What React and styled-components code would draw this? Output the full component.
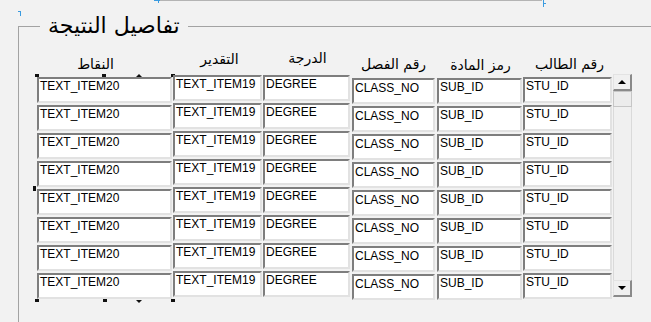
import styled, { createGlobalStyle } from 'styled-components'

const GlobalStyle = createGlobalStyle`
  html, body {
    margin: 0;
    padding: 0;
    background: #f2f2f2;
    overflow: hidden;
  }
`

const columns = [
  { name: 'TEXT_ITEM20', label: 'النقاط', width: 135, gap: 1, top: 3, lift: 1, shift: -9 },
  { name: 'TEXT_ITEM19', label: 'التقدير', width: 89, gap: 1, top: 1, lift: 6, shift: 2 },
  { name: 'DEGREE', label: 'الدرجة', width: 87, gap: 2, top: 1, lift: 7, shift: 1 },
  { name: 'CLASS_NO', label: 'رقم الفصل', width: 83, gap: 2, top: 4, lift: 1, shift: 0, textTop: 2 },
  { name: 'SUB_ID', label: 'رمز المادة', width: 85, gap: 1, top: 4, lift: 0, shift: 1 },
  { name: 'STU_ID', label: 'رقم الطالب', width: 89, gap: 1, top: 3, lift: 1, shift: 2 },
]

const ROWS = 8

const Page = styled.div`
  position: relative;
  width: 651px;
  height: 322px;
  overflow: hidden;
  font-family: "Liberation Sans", Arial, sans-serif;
`

const TopEdge = styled.div`
  height: 1px;
  width: 384px;
  margin-left: 158px;
  background: #b4b4b4;
`

const Mark = styled.div`
  position: absolute;
  left: ${p => p.x}px;
  top: ${p => p.y}px;
  width: ${p => p.w}px;
  height: ${p => p.h}px;
  background: #3a9be0;
`

const Frame = styled.fieldset`
  box-sizing: border-box;
  height: 310px;
  min-width: 0;
  margin: 11px 0 0 18px;
  padding: 0 0 0 18px;
  border: none;
  border-top: 1px solid #a3a3a3;
  border-left: 1px solid #a3a3a3;
`

const Legend = styled.legend`
  margin-left: 3px;
  padding: 0 8px;
  font-family: "DejaVu Sans", sans-serif;
  font-size: 22px;
  line-height: 28px;
  color: #000;
`

const HeaderRow = styled.div`
  display: flex;
  align-items: flex-end;
  height: 34px;
`

const Header = styled.div`
  box-sizing: border-box;
  display: flex;
  justify-content: center;
  width: ${p => p.width}px;
  margin-right: ${p => p.gap}px;
  margin-bottom: ${p => p.lift}px;
  padding-left: ${p => (p.shift > 0 ? p.shift * 2 : 0)}px;
  padding-right: ${p => (p.shift < 0 ? -p.shift * 2 : 0)}px;
  font-family: "DejaVu Sans", sans-serif;
  font-size: 14px;
  line-height: 18px;
  color: #000;
  white-space: nowrap;
`

const Body = styled.div`
  display: flex;
  align-items: flex-start;
`

const Column = styled.div`
  position: relative;
  display: flex;
  flex-direction: column;
  gap: 2px;
  width: ${p => p.width}px;
  margin-right: ${p => p.gap}px;
  margin-top: ${p => p.top}px;
`

const Field = styled.div`
  box-sizing: border-box;
  height: 26px;
  padding: ${p => p.textTop}px 0 0 1px;
  background: #fff;
  border-top: 2px solid #7e7e7e;
  border-left: 2px solid #7e7e7e;
  border-right: 2px solid #e2e2e2;
  border-bottom: 2px solid #e2e2e2;
  font-size: 12px;
  line-height: 12px;
  color: #000;
  white-space: nowrap;
  overflow: hidden;
`

const Handle = styled.div`
  position: absolute;
  left: ${p => p.x}px;
  top: ${p => p.y}px;
  width: ${p => p.w || 4}px;
  height: ${p => p.h || 3}px;
  background: #111;
`

const Notch = styled.div`
  position: absolute;
  left: ${p => p.x}px;
  top: ${p => p.y}px;
  width: 0;
  height: 0;
  border-left: 3px solid transparent;
  border-right: 3px solid transparent;
  ${p => (p.down ? 'border-top: 3px solid #111;' : 'border-bottom: 3px solid #111;')}
`

const ScrollBar = styled.div`
  box-sizing: border-box;
  display: flex;
  flex-direction: column;
  width: 19px;
  height: 223px;
  background: #f0f0f0;
  border-left: 1px solid #dadada;
  border-right: 1px solid #dadada;
`

const ScrollButton = styled.div`
  box-sizing: border-box;
  display: flex;
  align-items: center;
  justify-content: center;
  height: 17px;
  margin: 0 -1px;
  background: #f0f0f0;
  border-top: 1px solid #e3e3e3;
  border-left: 1px solid #e3e3e3;
  border-right: 2px solid #8a8a8a;
  border-bottom: 2px solid #8a8a8a;
`

const Arrow = styled.div`
  width: 0;
  height: 0;
  border-left: 4px solid transparent;
  border-right: 4px solid transparent;
  ${p => (p.down ? 'border-top: 4px solid #000;' : 'border-bottom: 4px solid #000;')}
`

const Thumb = styled.div`
  box-sizing: border-box;
  height: 16px;
  margin: 0 -1px;
  background: #ececec;
  border: 1px solid #c6c6c6;
`

const Track = styled.div`
  flex: 1;
`

function SelectionHandles() {
  return (
    <>
      <Handle x={-2} y={-3} />
      <Handle x={65} y={-3} />
      <Handle x={134} y={-3} />
      <Notch x={99} y={-3} />
      <Handle x={-4} y={109} w={3} h={5} />
      <Handle x={-2} y={222} />
      <Handle x={66} y={222} />
      <Handle x={134} y={222} />
      <Notch x={99} y={223} down />
    </>
  )
}

export default function App() {
  return (
    <Page>
      <GlobalStyle />
      <TopEdge />
      <Mark x={154} y={0} w={6} h={1} />
      <Mark x={158} y={0} w={1} h={3} />
      <Mark x={543} y={0} w={1} h={7} />
      <Mark x={543} y={3} w={3} h={1} />
      <Mark x={18} y={11} w={3} h={1} />
      <Mark x={20} y={11} w={1} h={5} />
      <Frame>
        <Legend>تفاصيل النتيجة</Legend>
        <HeaderRow>
          {columns.map(col => (
            <Header key={col.name} width={col.width} gap={col.gap} lift={col.lift} shift={col.shift}>
              {col.label}
            </Header>
          ))}
        </HeaderRow>
        <Body>
          {columns.map((col, i) => (
            <Column key={col.name} width={col.width} gap={col.gap} top={col.top}>
              {Array.from({ length: ROWS }, (_, r) => (
                <Field key={r} textTop={col.textTop || 1}>{col.name}</Field>
              ))}
              {i === 0 && <SelectionHandles />}
            </Column>
          ))}
          <ScrollBar>
            <ScrollButton><Arrow /></ScrollButton>
            <Thumb />
            <Track />
            <ScrollButton><Arrow down /></ScrollButton>
          </ScrollBar>
        </Body>
      </Frame>
    </Page>
  )
}
